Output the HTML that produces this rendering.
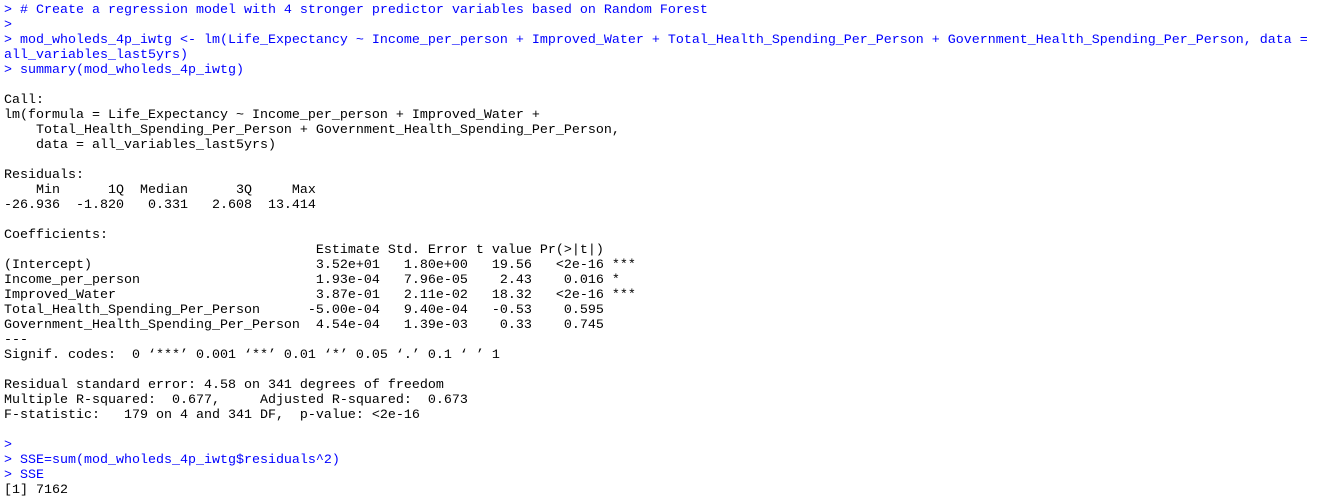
<!DOCTYPE html>
<html><head><meta charset="utf-8"><style>
html,body{margin:0;padding:0;background:#fff;width:1322px;height:501px;overflow:hidden}
pre{margin:0;position:absolute;left:4px;top:3px;font-family:"Liberation Mono",monospace;font-size:13.33px;line-height:15px;color:#000}
.b{color:#0000ff}
</style></head><body><pre><span class="b">&gt; # Create a regression model with 4 stronger predictor variables based on Random Forest
&gt; 
&gt; mod_wholeds_4p_iwtg &lt;- lm(Life_Expectancy ~ Income_per_person + Improved_Water + Total_Health_Spending_Per_Person + Government_Health_Spending_Per_Person, data = 
all_variables_last5yrs)
&gt; summary(mod_wholeds_4p_iwtg)</span>

Call:
lm(formula = Life_Expectancy ~ Income_per_person + Improved_Water + 
    Total_Health_Spending_Per_Person + Government_Health_Spending_Per_Person, 
    data = all_variables_last5yrs)

Residuals:
    Min      1Q  Median      3Q     Max 
-26.936  -1.820   0.331   2.608  13.414 

Coefficients:
                                       Estimate Std. Error t value Pr(&gt;|t|)    
(Intercept)                            3.52e+01   1.80e+00   19.56   &lt;2e-16 ***
Income_per_person                      1.93e-04   7.96e-05    2.43    0.016 *  
Improved_Water                         3.87e-01   2.11e-02   18.32   &lt;2e-16 ***
Total_Health_Spending_Per_Person      -5.00e-04   9.40e-04   -0.53    0.595    
Government_Health_Spending_Per_Person  4.54e-04   1.39e-03    0.33    0.745    
---
Signif. codes:  0 ‘***’ 0.001 ‘**’ 0.01 ‘*’ 0.05 ‘.’ 0.1 ‘ ’ 1

Residual standard error: 4.58 on 341 degrees of freedom
Multiple R-squared:  0.677,	Adjusted R-squared:  0.673 
F-statistic:   179 on 4 and 341 DF,  p-value: &lt;2e-16

<span class="b">&gt; 
&gt; SSE=sum(mod_wholeds_4p_iwtg$residuals^2)
&gt; SSE</span>
[1] 7162</pre></body></html>
